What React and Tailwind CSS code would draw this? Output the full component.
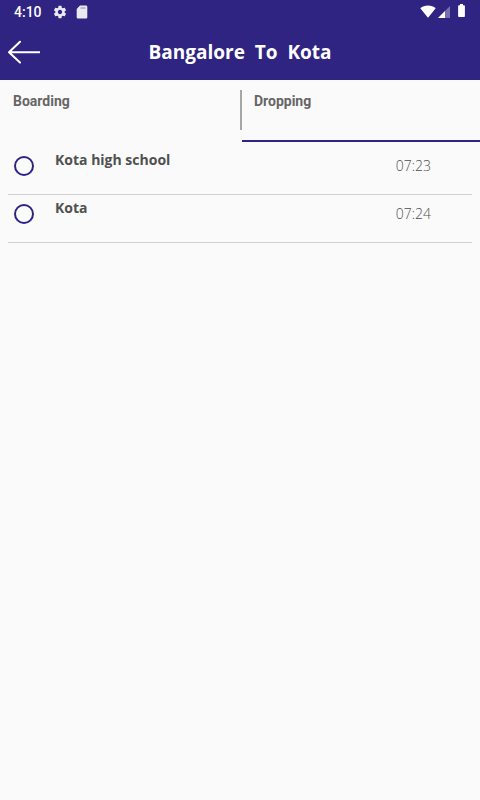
import React, { useState } from "react";

const stops = {
  boarding: [],
  dropping: [
    { id: "kota-high-school", name: "Kota high school", time: "07:23" },
    { id: "kota", name: "Kota", time: "07:24" },
  ],
};

const StatusBar = () => (
  <div className="h-6 flex items-center justify-between pl-3.5 pr-[11px] text-white">
    <div className="flex items-center">
      <span className="font-['Roboto',sans-serif] text-sm font-medium">4:10</span>
      {/* Settings */}
      <svg className="w-4 h-4 ml-2.5" viewBox="-1 -1 26 26" fill="currentColor" opacity="0.9">
        <path d="M19.43 12.98c.04-.32.07-.64.07-.98s-.03-.66-.07-.98l2.11-1.65c.19-.15.24-.42.12-.64l-2-3.46c-.12-.22-.39-.3-.61-.22l-2.49 1c-.52-.4-1.08-.73-1.69-.98l-.38-2.65C14.46 2.18 14.25 2 14 2h-4c-.25 0-.46.18-.49.42l-.38 2.65c-.61.25-1.17.59-1.69.98l-2.49-1c-.23-.09-.49 0-.61.22l-2 3.46c-.13.22-.07.49.12.64l2.11 1.65c-.04.32-.07.65-.07.98s.03.66.07.98l-2.11 1.65c-.19.15-.24.42-.12.64l2 3.46c.12.22.39.3.61.22l2.49-1c.52.4 1.08.73 1.69.98l.38 2.65c.03.24.24.42.49.42h4c.25 0 .46-.18.49-.42l.38-2.65c.61-.25 1.17-.59 1.69-.98l2.49 1c.23.09.49 0 .61-.22l2-3.46c.12-.22.07-.49-.12-.64l-2.11-1.65zM12 15.5c-1.93 0-3.5-1.57-3.5-3.5s1.57-3.5 3.5-3.5 3.5 1.57 3.5 3.5-1.57 3.5-3.5 3.5z" />
      </svg>
      {/* SD card */}
      <svg className="w-4 h-4 ml-1.5" viewBox="0 0 16 16" fill="currentColor" opacity="0.9">
        <path d="M6 1.500h6c.7 0 1.300.6 1.300 1.300v10.400c0 .7-.6 1.300-1.300 1.300H4c-.7 0-1.300-.6-1.300-1.300V5z" />
        <path d="M6.500 4h5" stroke="#2f2482" strokeWidth="1" opacity="0.5" />
      </svg>
    </div>
    <div className="flex items-center">
      {/* Wifi */}
      <svg className="w-4 h-4" viewBox="0 0 16 16" fill="currentColor">
        <path d="M.3 4.300C2.400 2.400 5 1.500 8 1.500s5.600.9 7.700 2.800L8 13.700z" />
      </svg>
      {/* Signal */}
      <svg className="w-4 h-4" viewBox="0 0 16 16" fill="currentColor">
        <path d="M14 2v12H2z" opacity="0.35" />
        <path d="M9 7v7H2z" />
      </svg>
      {/* Battery */}
      <svg className="w-4 h-4 ml-px" viewBox="0 0 16 16" fill="currentColor">
        <path d="M7 0h3v1.300h1c.6 0 .9.3.9.9v9.900c0 .5-.3.9-.9.9H6c-.6 0-.9-.4-.9-.9V2.200c0-.6.3-.9.9-.9h1z" />
      </svg>
    </div>
  </div>
);

const StopRow = ({ stop, checked, onSelect }) => (
  <li className="border-b border-[#cfcfcf]">
    <label className="flex items-start h-[47px] pl-1.5 pr-[41px] cursor-pointer">
      <input
        type="radio"
        name="stop"
        value={stop.id}
        checked={checked}
        onChange={() => onSelect(stop.id)}
        className="
          appearance-none shrink-0 w-5 h-5 mt-[9px]
          rounded-full border-2 border-[#2f2482]
          checked:bg-[#2f2482] checked:shadow-[inset_0_0_0_3px_#fafafa]
        "
      />
      <span className="flex-1 ml-[21px] mt-[3px] text-sm font-bold text-[#505050]">
        {stop.name}
      </span>
      <span className="mt-[9px] text-sm font-light text-[#505050]">
        {stop.time}
      </span>
    </label>
  </li>
);

const App = () => {
  const [tab, setTab] = useState("dropping");
  const [selected, setSelected] = useState(null);

  const tabClass = (name) =>
    `h-[62px] pt-[11px] text-left flex items-start border-b-2 ${
      tab === name ? "border-[#2f2482]" : "border-transparent"
    }`;

  return (
    <div className="min-h-screen bg-[#fafafa] font-['Open_Sans',sans-serif]">
      {/* Header */}
      <header className="bg-[#2f2482]">
        <StatusBar />
        <div className="h-14 grid grid-cols-[40px_1fr_40px] items-center text-white">
          <button type="button" aria-label="Back" className="pl-2">
            <svg
              className="w-8 h-8"
              viewBox="0 0 32 32"
              fill="none"
              stroke="currentColor"
              strokeWidth="2"
              strokeLinecap="round"
              strokeLinejoin="round"
            >
              <path d="M31.500 16.200H1M12 5.800L1 16.200 12 26.600" />
            </svg>
          </button>
          <h1 className="text-center text-[19px] leading-7 font-bold whitespace-pre">
            {"Bangalore  To  Kota"}
          </h1>
        </div>
      </header>

      {/* Tabs */}
      <nav className="flex font-['Roboto',sans-serif] text-sm font-bold text-[#666666]">
        <button
          type="button"
          onClick={() => setTab("boarding")}
          className={`w-1/2 shrink-0 ${tabClass("boarding")}`}
        >
          <span className="pl-[13px]">Boarding</span>
        </button>
        <div className="w-0.5 h-10 mt-2.5 bg-[#a6a6a6]" />
        <button
          type="button"
          onClick={() => setTab("dropping")}
          className={`flex-1 ${tabClass("dropping")}`}
        >
          <span className="pl-3">Dropping</span>
        </button>
      </nav>

      {/* Stops */}
      <ul className="mx-2 mt-[5px]">
        {stops[tab].map((stop) => (
          <StopRow
            key={stop.id}
            stop={stop}
            checked={selected === stop.id}
            onSelect={setSelected}
          />
        ))}
      </ul>
    </div>
  );
};

export default App;
